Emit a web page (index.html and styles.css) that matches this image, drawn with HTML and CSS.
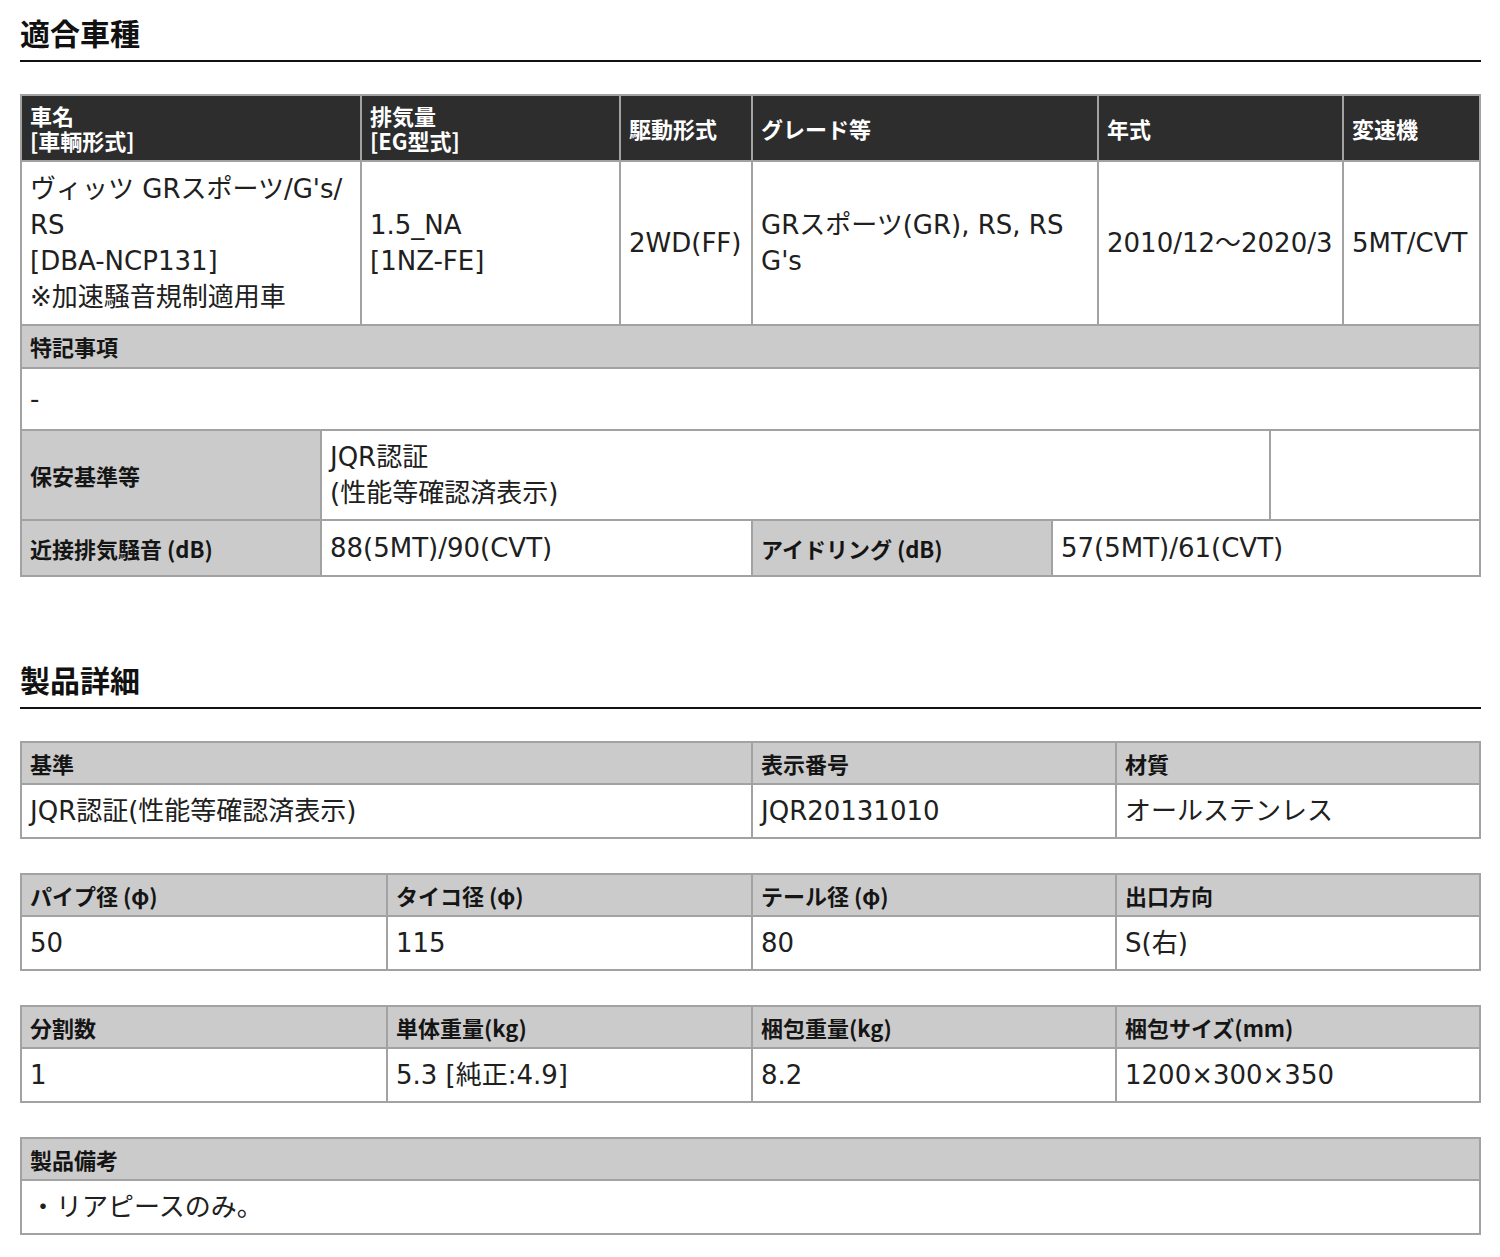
FILE: index.html
```html
<!DOCTYPE html>
<html lang="ja">
<head>
<meta charset="utf-8">
<title>適合車種・製品詳細</title>
<link rel="stylesheet" href="styles.css">
</head>
<body>
<div class="page">
  <h2 class="sec-title">適合車種</h2>

  <table class="spec first">
    <colgroup><col><col class="w259"><col class="w132"><col class="w346"><col class="w245"><col class="w137"></colgroup>
    <thead>
      <tr>
        <th class="dark">車名<br>[車輌形式]</th>
        <th class="dark">排気量<br>[EG型式]</th>
        <th class="dark">駆動形式</th>
        <th class="dark">グレード等</th>
        <th class="dark">年式</th>
        <th class="dark">変速機</th>
      </tr>
    </thead>
    <tbody>
      <tr class="roomy">
        <td class="nowrap">ヴィッツ GRスポーツ/G's/<br>RS<br>[DBA-NCP131]<br>※加速騒音規制適用車</td>
        <td>1.5_NA<br>[1NZ-FE]</td>
        <td class="nowrap">2WD(FF)</td>
        <td>GRスポーツ(GR), RS, RS<br>G's</td>
        <td class="nowrap">2010/12～2020/3</td>
        <td class="nowrap">5MT/CVT</td>
      </tr>
    </tbody>
  </table>

  <table class="spec join">
    <tbody>
      <tr class="roomy"><th class="sub">特記事項</th></tr>
      <tr><td class="note">-</td></tr>
    </tbody>
  </table>

  <table class="spec join">
    <colgroup><col><col class="w431"><col class="w300"><col class="w218"><col class="w210"></colgroup>
    <tbody>
      <tr>
        <th class="sub">保安基準等</th>
        <td colspan="3" class="tight">JQR認証<br>(性能等確認済表示)</td>
        <td></td>
      </tr>
      <tr class="roomy">
        <th class="sub">近接排気騒音 (dB)</th>
        <td>88(5MT)/90(CVT)</td>
        <th class="sub">アイドリング (dB)</th>
        <td colspan="2">57(5MT)/61(CVT)</td>
      </tr>
    </tbody>
  </table>

  <h2 class="sec-title second">製品詳細</h2>

  <table class="spec first">
    <colgroup><col><col class="w364"><col class="w364"></colgroup>
    <tbody>
      <tr><th class="sub">基準</th><th class="sub">表示番号</th><th class="sub">材質</th></tr>
      <tr><td>JQR認証(性能等確認済表示)</td><td>JQR20131010</td><td>オールステンレス</td></tr>
    </tbody>
  </table>

  <table class="spec gap">
    <colgroup><col><col class="w365"><col class="w364"><col class="w364"></colgroup>
    <tbody>
      <tr><th class="sub">パイプ径 (φ)</th><th class="sub">タイコ径 (φ)</th><th class="sub">テール径 (φ)</th><th class="sub">出口方向</th></tr>
      <tr><td>50</td><td>115</td><td>80</td><td>S(右)</td></tr>
    </tbody>
  </table>

  <table class="spec gap">
    <colgroup><col><col class="w365"><col class="w364"><col class="w364"></colgroup>
    <tbody>
      <tr><th class="sub">分割数</th><th class="sub">単体重量(kg)</th><th class="sub">梱包重量(kg)</th><th class="sub">梱包サイズ(mm)</th></tr>
      <tr><td>1</td><td>5.3 [純正:4.9]</td><td>8.2</td><td>1200×300×350</td></tr>
    </tbody>
  </table>

  <table class="spec gap">
    <tbody>
      <tr><th class="sub">製品備考</th></tr>
      <tr><td>・リアピースのみ。</td></tr>
    </tbody>
  </table>
</div>
</body>
</html>
```

FILE: styles.css
```css
body {
  margin: 0;
  background: #ffffff;
  color: #222222;
  font-family: "DejaVu Sans", "Noto Sans CJK JP", sans-serif;
}

.page {
  width: 1461px;
  padding: 0 0 20px 20px;
}

.sec-title {
  margin: 0;
  padding: 12px 0 8px;
  font-family: "Noto Sans CJK JP", sans-serif;
  font-size: 30px;
  font-weight: 700;
  line-height: 40px;
  color: #111111;
  border-bottom: 2px solid #111111;
}

.sec-title.second {
  margin-top: 70px;
}

.spec {
  width: 1461px;
  table-layout: fixed;
  border-collapse: separate;
  border-spacing: 0;
  border-top: 2px solid #a2a2a2;
  border-left: 2px solid #a2a2a2;
}

.spec.first {
  margin-top: 32px;
}

.spec.join {
  border-top: 0;
}

.spec.gap {
  margin-top: 34px;
}

.w132 { width: 132px; }
.w137 { width: 137px; }
.w210 { width: 210px; }
.w218 { width: 218px; }
.w245 { width: 245px; }
.w259 { width: 259px; }
.w300 { width: 300px; }
.w346 { width: 346px; }
.w364 { width: 364px; }
.w365 { width: 365px; }
.w431 { width: 431px; }

.spec th,
.spec td {
  border-right: 2px solid #a2a2a2;
  border-bottom: 2px solid #a2a2a2;
  padding: 8px 8px;
  text-align: left;
  vertical-align: middle;
}

.spec th {
  font-family: "Noto Sans CJK JP", sans-serif;
  font-size: 22px;
  font-weight: 700;
  line-height: 24px;
}

.spec th.dark {
  background: #2d2d2d;
  color: #ffffff;
  line-height: 25px;
  padding-top: 7px;
  padding-bottom: 7px;
}

.spec th.sub {
  background: #cbcbcb;
  color: #151515;
}

.spec td {
  font-size: 26px;
  line-height: 36px;
  font-weight: 400;
  color: #202020;
}

.spec .roomy > td,
.spec .roomy > th {
  padding-top: 9px;
  padding-bottom: 9px;
}

.spec .roomy > th.sub {
  padding-top: 8px;
}

.spec td.nowrap {
  white-space: nowrap;
}

.spec td.note {
  padding-top: 12px;
  padding-bottom: 12px;
}

.spec td.tight {
  line-height: 36px;
}
```
